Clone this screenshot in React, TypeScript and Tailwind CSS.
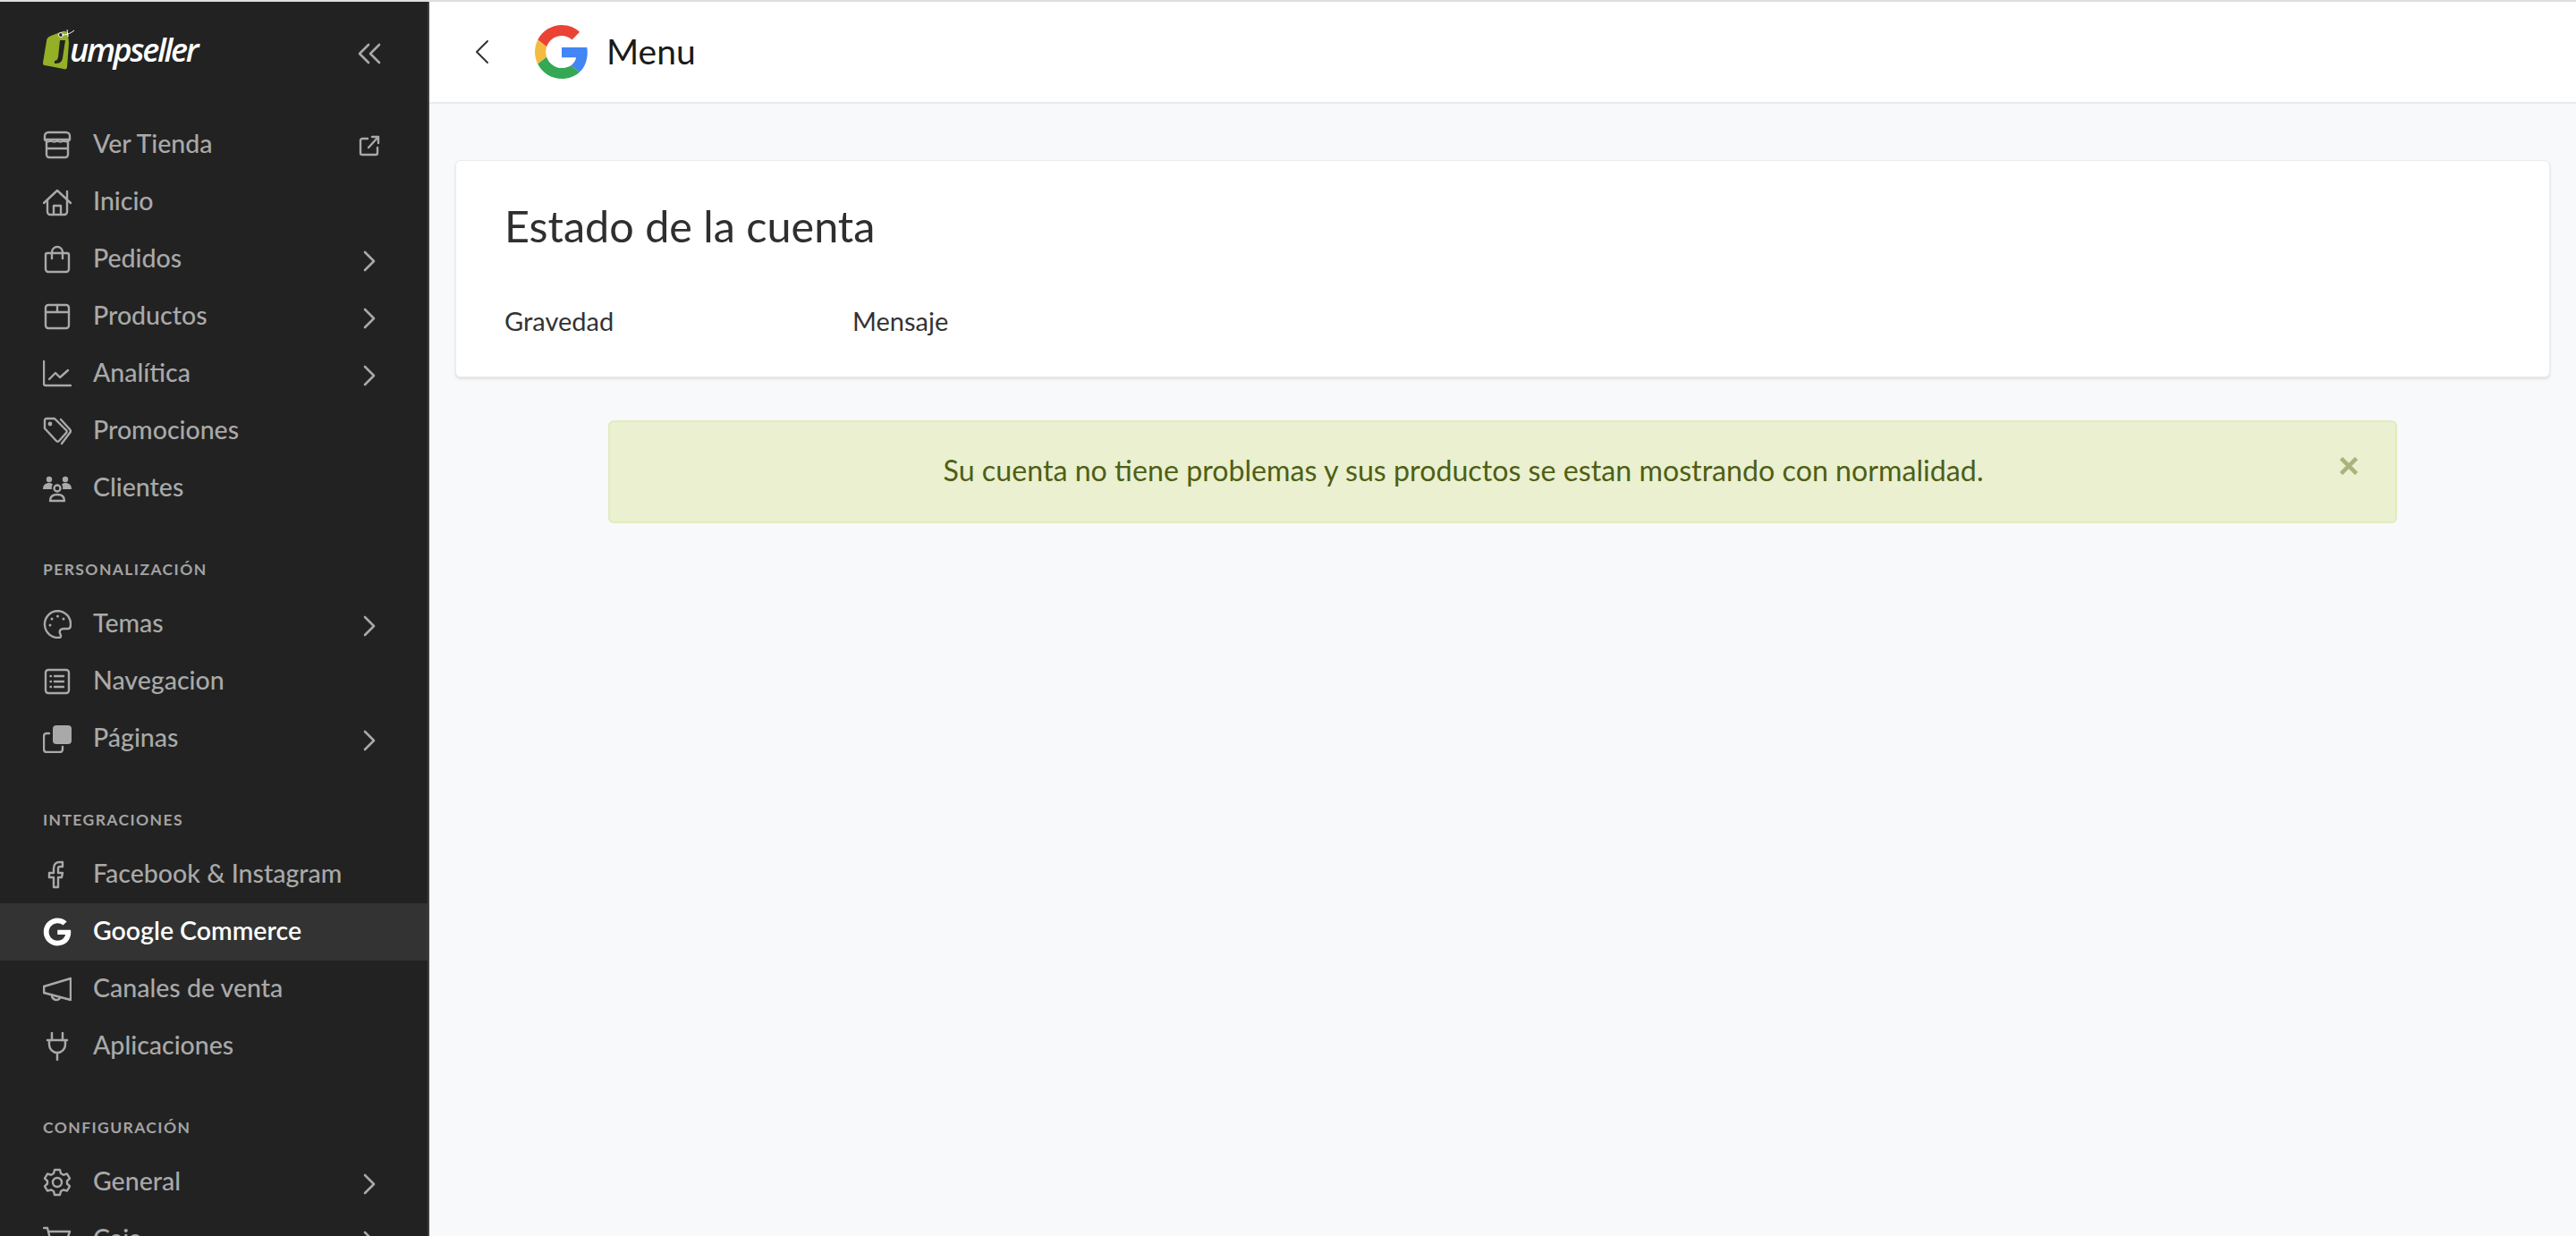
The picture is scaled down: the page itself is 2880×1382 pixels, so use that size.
import type { ReactNode } from 'react';
import { FaGoogle } from 'react-icons/fa';

const sans = "font-['Lato','Open_Sans',sans-serif]";

// all sidebar icons sit in a 32x32 box
function Ico({ children }: { children: ReactNode }) {
  return (
    <svg viewBox="0 0 32 32" className="h-8 w-8 shrink-0" fill="none" stroke="currentColor" strokeWidth="2.400" strokeLinecap="round" strokeLinejoin="round">
      {children}
    </svg>
  );
}

const icons: Record<string, ReactNode> = {
  store: (
    <Ico>
      <path d="M6 2h20a4 4 0 0 1 4 4v4H2V6a4 4 0 0 1 4-4z" />
      <path d="M2 10c2 3 5 3 7 1 2 2 5 2 7 0 2 2 5 2 7 0 2 2 5 2 7-1" />
      <path d="M4 13v14a3 3 0 0 0 3 3h18a3 3 0 0 0 3-3V13M4 20h24" />
    </Ico>
  ),
  home: (
    <Ico>
      <path d="M1 17 16 3l15 14M27 4v9" />
      <path d="M5 14v13a3 3 0 0 0 3 3h16a3 3 0 0 0 3-3V14" />
      <path d="M12 30V20h8v10" />
    </Ico>
  ),
  bag: (
    <Ico>
      <path d="M5 9h22a2 2 0 0 1 2 2v16a3 3 0 0 1-3 3H6a3 3 0 0 1-3-3V11a2 2 0 0 1 2-2z" />
      <path d="M10 15V8a6 6 0 0 1 12 0v7" />
    </Ico>
  ),
  box: (
    <Ico>
      <rect x="3" y="3" width="26" height="26" rx="3" />
      <path d="M3 11h26M16 3v8" />
    </Ico>
  ),
  chart: (
    <Ico>
      <path d="M1 2v25a2 2 0 0 0 2 2h28" />
      <path d="M7 22l7-7 5 5 9-8" />
    </Ico>
  ),
  tags: (
    <Ico>
      <path d="M2 4a2 2 0 0 1 2-2h9l13 13a2 2 0 0 1 0 3L18 27a2 2 0 0 1-3 0L2 13z" />
      <path d="M20 3l10 11a3 3 0 0 1 0 4L21 30" />
      <circle cx="8" cy="8" r="1.200" fill="currentColor" />
    </Ico>
  ),
  users: (
    <Ico>
      <circle cx="7" cy="6" r="3.200" fill="currentColor" stroke="none" />
      <circle cx="25" cy="6" r="3.200" fill="currentColor" stroke="none" />
      <path d="M0 17c0-5 3-7 7-7 2 0 3 .6 4 1.500-1 1.500-1.500 3.500-1 5.500zM32 17c0-5-3-7-7-7-2 0-3 .6-4 1.500 1 1.500 1.500 3.500 1 5.500z" fill="currentColor" stroke="none" />
      <circle cx="16" cy="16" r="3.500" />
      <path d="M8 30c0-5 3-7 8-7s8 2 8 7z" />
    </Ico>
  ),
  palette: (
    <Ico>
      <path d="M16 1a15 15 0 1 0 2 30c3 0 2-3 1-5-1-3 1-5 4-5h5c2 0 3-2 3-5C31 7 24 1 16 1z" />
      <circle cx="8" cy="17" r="1.500" fill="currentColor" stroke="none" />
      <circle cx="10" cy="10" r="1.500" fill="currentColor" stroke="none" />
      <circle cx="16.500" cy="7" r="1.500" fill="currentColor" stroke="none" />
      <circle cx="23" cy="10" r="1.500" fill="currentColor" stroke="none" />
    </Ico>
  ),
  list: (
    <Ico>
      <rect x="3" y="3" width="26" height="26" rx="3" />
      <path d="M13 10h10M13 16h10M13 22h10" />
      <path d="M8.500 10h.5M8.500 16h.5M8.500 22h.5" />
    </Ico>
  ),
  pages: (
    <Ico>
      <rect x="11" y="1" width="21" height="21" rx="4" fill="currentColor" stroke="none" />
      <path d="M7 10H4a3 3 0 0 0-3 3v15a3 3 0 0 0 3 3h15a3 3 0 0 0 3-3v-3" />
    </Ico>
  ),
  facebook: (
    <Ico>
      <path d="M12 30V19H7v-5h5V9c0-5 3-7 6-7h4v5h-3c-2 0-2 1-2 2v5h5l-1 5h-4v11z" />
    </Ico>
  ),
  google: <FaGoogle className="h-8 w-8 shrink-0" />,
  megaphone: (
    <Ico>
      <path d="M1 13l30-9v24L1 20z" />
      <path d="M1 13v7M10 23a5 5 0 0 0 9 3" />
    </Ico>
  ),
  plug: (
    <Ico>
      <path d="M10 1v8M22 1v8" strokeWidth="2.500" />
      <path d="M5 9h22M7 9v5a9 9 0 0 0 18 0V9M16 23v8" strokeWidth="2.500" />
    </Ico>
  ),
  gear: (
    <Ico>
      <circle cx="16" cy="16" r="5" />
      <path d="M13 2h6l1 4 3 1.700 4-1.200 3 5.200-3 2.800v3l3 2.800-3 5.200-4-1.200-3 1.700-1 4h-6l-1-4-3-1.700-4 1.200-3-5.200 3-2.800v-3l-3-2.800 3-5.200 4 1.200L12 6z" />
    </Ico>
  ),
  cart: (
    <Ico>
      <path d="M1 3h4l4 16h17l4-12H6" />
    </Ico>
  ),
};

function Chevron() {
  return (
    <svg viewBox="0 0 14 24" className="h-6 w-3.5" fill="none" stroke="currentColor" strokeWidth="2.600" strokeLinecap="round" strokeLinejoin="round">
      <path d="M2 2l10 10L2 22" />
    </svg>
  );
}

function ExternalLink() {
  return (
    <svg viewBox="0 0 24 24" className="h-6 w-6" fill="none" stroke="currentColor" strokeWidth="2.400" strokeLinecap="round" strokeLinejoin="round">
      <path d="M10 4H4a2 2 0 0 0-2 2v14a2 2 0 0 0 2 2h15a2 2 0 0 0 2-2v-6" />
      <path d="M11 14 22 2M15 2h7v7" />
    </svg>
  );
}

function NavItem({ icon, label, arrow, external, active }: { icon: string; label: string; arrow?: boolean; external?: boolean; active?: boolean }) {
  return (
    <div className={`flex h-16 shrink-0 items-center pl-12 pr-[56px] ${active ? 'bg-[#333333] text-white' : 'text-[#a9a9a9]'}`}>
      {icons[icon]}
      <span className={`ml-6 -mt-[3px] flex-1 text-[28.500px] leading-none ${active ? 'font-semibold' : 'font-medium'}`}>{label}</span>
      {arrow && <span className="mr-[2px] mt-[4px] text-[#a9a9a9]"><Chevron /></span>}
      {external && <span className="-mr-[3px] mt-[2px] text-[#a9a9a9]"><ExternalLink /></span>}
    </div>
  );
}

function SectionLabel({ children }: { children: string }) {
  return (
    <div className="h-[88px] shrink-0 pl-12 pt-[47px]">
      <div className="text-[17.500px] font-bold leading-6 tracking-[0.08em] text-[#a3a3a3]">{children}</div>
    </div>
  );
}

function Logo() {
  return (
    <div className="flex items-center">
      <svg viewBox="0 0 38 48" className="h-12 w-[38px]" fill="none">
        <path d="M9 8 22 3c3-1 5 0 6 3l1 10-2 27c0 2-2 3-4 2L2 41c-2 0-2-2-2-3L4 14c0-3 2-5 5-6z" fill="#93b026" />
        <circle cx="20" cy="7" r="2.500" fill="#222222" stroke="#ffffff" strokeWidth="1" />
        <path d="M21 7c5 0 9-1 14-5M27 1l1 8" stroke="#ffffff" strokeWidth="1" />
        <path d="M19 13h6l-3 20c-1 5-4 6-9 6v-3c2 0 3-1 4-4z" fill="#222222" />
      </svg>
      <span className="-ml-[8px] font-['Open_Sans',sans-serif] text-[36px] font-semibold italic leading-none tracking-[-0.065em] text-white">umpseller</span>
    </div>
  );
}

function Sidebar() {
  return (
    <aside className="flex h-full w-[480px] shrink-0 flex-col overflow-hidden border-r-2 border-[#3f4043] bg-[#222222]">
      <div className="flex h-[128px] shrink-0 items-start justify-between pl-12 pr-[52px] pt-[30px]">
        <Logo />
        <svg viewBox="0 0 26 24" className="mt-[16px] h-6 w-[26px] text-[#a9a9a9]" fill="none" stroke="currentColor" strokeWidth="2.600" strokeLinecap="round" strokeLinejoin="round">
          <path d="M12 2 2 12l10 10M24 2 14 12l10 10" />
        </svg>
      </div>
      <NavItem icon="store" label="Ver Tienda" external />
      <NavItem icon="home" label="Inicio" />
      <NavItem icon="bag" label="Pedidos" arrow />
      <NavItem icon="box" label="Productos" arrow />
      <NavItem icon="chart" label="Analítica" arrow />
      <NavItem icon="tags" label="Promociones" />
      <NavItem icon="users" label="Clientes" />
      <SectionLabel>PERSONALIZACIÓN</SectionLabel>
      <NavItem icon="palette" label="Temas" arrow />
      <NavItem icon="list" label="Navegacion" />
      <NavItem icon="pages" label="Páginas" arrow />
      <SectionLabel>INTEGRACIONES</SectionLabel>
      <NavItem icon="facebook" label="Facebook & Instagram" />
      <NavItem icon="google" label="Google Commerce" active />
      <NavItem icon="megaphone" label="Canales de venta" />
      <NavItem icon="plug" label="Aplicaciones" />
      <SectionLabel>CONFIGURACIÓN</SectionLabel>
      <NavItem icon="gear" label="General" arrow />
      <NavItem icon="cart" label="Caja" arrow />
    </aside>
  );
}

function GoogleG() {
  return (
    <svg viewBox="0 0 48 48" className="h-[60px] w-[60px]">
      <path fill="#EA4335" d="M24 9.500c3.540 0 6.710 1.220 9.210 3.600l6.850-6.850C35.900 2.380 30.470 0 24 0 14.620 0 6.510 5.380 2.560 13.220l7.980 6.190C12.430 13.720 17.740 9.500 24 9.500z" />
      <path fill="#4285F4" d="M46.980 24.550c0-1.570-.15-3.090-.38-4.550H24v9.020h12.940c-.58 2.960-2.260 5.480-4.780 7.180l7.730 6c4.510-4.180 7.090-10.360 7.090-17.650z" />
      <path fill="#F4BB41" d="M10.530 28.590c-.48-1.450-.76-2.990-.76-4.590s.27-3.140.76-4.590l-7.980-6.190C.92 16.460 0 20.120 0 24c0 3.880.92 7.540 2.560 10.780l7.970-6.190z" />
      <path fill="#34A853" d="M24 48c6.480 0 11.930-2.130 15.890-5.810l-7.730-6c-2.150 1.450-4.920 2.300-8.160 2.300-6.260 0-11.570-4.220-13.470-9.910l-7.980 6.190C6.510 42.620 14.620 48 24 48z" />
    </svg>
  );
}

export default function App() {
  return (
    <div className={`flex h-[1382px] overflow-hidden border-t-2 border-[#dedede] ${sans}`}>
      <Sidebar />
      <main className="flex min-w-0 flex-1 flex-col bg-[#f8f9fb]">
        <header className="flex h-[114px] shrink-0 items-center border-b-2 border-[#e8e9eb] bg-white pl-[51px]">
          <svg viewBox="0 0 16 28" className="h-7 w-4 text-[#333333]" fill="none" stroke="currentColor" strokeWidth="2" strokeLinecap="round" strokeLinejoin="round">
            <path d="M14 2 2 14l12 12" />
          </svg>
          <div className="ml-[51px]"><GoogleG /></div>
          <h1 className="ml-5 -mt-[2px] text-[39px] font-normal leading-none text-[#1a1a1a]">Menu</h1>
        </header>
        <div className="flex flex-col px-[29px] pt-[63px]">
          <section className="h-[243px] rounded-md border border-[#ebebeb] bg-white pl-[54px] pt-[42px] shadow-[0_2px_3px_rgba(0,0,0,0.1)]">
            <h2 className="text-[48.500px] font-normal leading-[60px] text-[#2f2f2f]">Estado de la cuenta</h2>
            <div className="mt-[61px] grid grid-cols-[389px_1fr] text-[29px] leading-8 text-[#333333]">
              <span>Gravedad</span>
              <span>Mensaje</span>
            </div>
          </section>
          <div className="mx-auto mt-12 flex h-[115px] w-[2000px] items-start rounded-md border-2 border-[#e2ebbd] bg-[#eaf0d0] pr-[42px] text-[#4f5f14]">
            <p className="mt-[34px] flex-1 pr-[26px] text-center text-[32.200px] leading-10">Su cuenta no tiene problemas y sus productos se estan mostrando con normalidad.</p>
            <svg viewBox="0 0 20 20" className="mt-[39px] h-5 w-5 text-[#a9b37c]" fill="none" stroke="currentColor" strokeWidth="4.500">
              <path d="M1.500 1.500l17 17M18.500 1.500l-17 17" />
            </svg>
          </div>
        </div>
      </main>
    </div>
  );
}
